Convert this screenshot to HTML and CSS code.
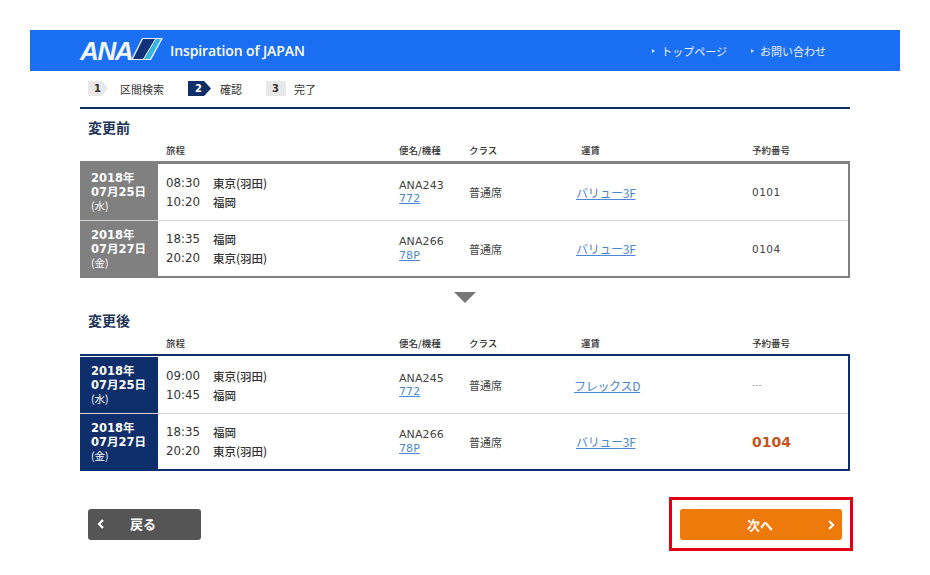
FILE: index.html
```html
<!DOCTYPE html>
<html lang="ja">
<head>
<meta charset="utf-8">
<title>ANA</title>
<link rel="stylesheet" href="styles.css">
</head>
<body>
<div class="page">
  <header class="topbar">
    <div class="brand">
      <span class="logo-text">ANA</span>
      <svg class="logo-tail" width="32" height="24" viewBox="0 0 32 24">
        <polygon points="11,1 32,1 20,23 0,23" fill="#eaf4ff"/>
        <polygon points="12,2 24,2 12,22 2,22" fill="#14327a"/>
        <polygon points="25,2 30,2 19,22 13,22" fill="#37b4e0"/>
      </svg>
      <span class="tagline">Inspiration of JAPAN</span>
    </div>
    <nav class="topnav">
      <a class="topnav-link">トップページ</a>
      <a class="topnav-link">お問い合わせ</a>
    </nav>
  </header>
  <main class="main">
    <ol class="steps">
      <li class="step step-one"><span class="chip chip-arrow">1</span><span class="step-label">区間検索</span></li>
      <li class="step step-two"><span class="chip chip-arrow chip-active">2</span><span class="step-label">確認</span></li>
      <li class="step step-three"><span class="chip">3</span><span class="step-label">完了</span></li>
    </ol>
    <div class="rule"></div>

    <h2 class="section-title">変更前</h2>
    <div class="cols col-head">
      <span></span><span class="head-route">旅程</span><span>便名/機種</span><span>クラス</span><span class="head-fare">運賃</span><span>予約番号</span>
    </div>
    <section class="itinerary itinerary-before">
      <div class="cols row">
        <div class="date">2018年<br>07月25日<br><small>(水)</small></div>
        <div class="route">
          <div class="leg"><span class="time">08:30</span><span class="place">東京(羽田)</span></div>
          <div class="leg"><span class="time">10:20</span><span class="place">福岡</span></div>
        </div>
        <div class="flight">ANA243<br><a class="link">772</a></div>
        <div class="plain">普通席</div>
        <div class="fare"><a class="link">バリュー3F</a></div>
        <div class="code">0101</div>
      </div>
      <div class="cols row">
        <div class="date">2018年<br>07月27日<br><small>(金)</small></div>
        <div class="route">
          <div class="leg"><span class="time">18:35</span><span class="place">福岡</span></div>
          <div class="leg"><span class="time">20:20</span><span class="place">東京(羽田)</span></div>
        </div>
        <div class="flight">ANA266<br><a class="link">78P</a></div>
        <div class="plain">普通席</div>
        <div class="fare"><a class="link">バリュー3F</a></div>
        <div class="code">0104</div>
      </div>
    </section>

    <div class="down-arrow"></div>

    <h2 class="section-title section-title-after">変更後</h2>
    <div class="cols col-head">
      <span></span><span class="head-route">旅程</span><span>便名/機種</span><span>クラス</span><span class="head-fare">運賃</span><span>予約番号</span>
    </div>
    <section class="itinerary itinerary-after">
      <div class="cols row">
        <div class="date">2018年<br>07月25日<br><small>(水)</small></div>
        <div class="route">
          <div class="leg"><span class="time">09:00</span><span class="place">東京(羽田)</span></div>
          <div class="leg"><span class="time">10:45</span><span class="place">福岡</span></div>
        </div>
        <div class="flight">ANA245<br><a class="link">772</a></div>
        <div class="plain">普通席</div>
        <div class="fare fare-flex"><a class="link">フレックスD</a></div>
        <div class="code code-empty">---</div>
      </div>
      <div class="cols row">
        <div class="date">2018年<br>07月27日<br><small>(金)</small></div>
        <div class="route">
          <div class="leg"><span class="time">18:35</span><span class="place">福岡</span></div>
          <div class="leg"><span class="time">20:20</span><span class="place">東京(羽田)</span></div>
        </div>
        <div class="flight">ANA266<br><a class="link">78P</a></div>
        <div class="plain">普通席</div>
        <div class="fare"><a class="link">バリュー3F</a></div>
        <div class="code code-new">0104</div>
      </div>
    </section>

    <div class="actions">
      <a class="btn btn-back">
        <svg class="chev" width="8" height="10" viewBox="0 0 8 10"><polyline points="6,1 2,5 6,9" fill="none" stroke="#fff" stroke-width="2.2"/></svg>
        <span>戻る</span>
      </a>
      <div class="highlight">
        <a class="btn btn-next">
          <span>次へ</span>
          <svg class="chev" width="8" height="10" viewBox="0 0 8 10"><polyline points="2,1 6,5 2,9" fill="none" stroke="#fff" stroke-width="2.2"/></svg>
        </a>
      </div>
    </div>
  </main>
</div>
</body>
</html>
```

FILE: styles.css
```css
* { box-sizing: border-box; }
html, body { margin: 0; padding: 0; background: #fff; }
body {
  font-family: "DejaVu Sans", "Noto Sans CJK JP", sans-serif;
  color: #333;
  font-size: 11px;
}
.page { width: 930px; height: 575px; padding: 30px 30px 0; overflow: hidden; }

/* top bar */
.topbar {
  height: 41px;
  background: #1a6ff2;
  display: flex;
  align-items: center;
  justify-content: space-between;
  padding: 0 74px 0 50px;
  color: #fff;
}
.brand { display: flex; align-items: center; }
.logo-text {
  font-family: "Liberation Sans", sans-serif;
  font-weight: 700;
  font-style: italic;
  font-size: 26px;
  letter-spacing: -1.4px;
  line-height: 28px;
  width: 51px;
  color: #f2f7ff;
}
.logo-tail { margin-right: 7px; margin-top: -3px; }
.tagline {
  font-family: "Open Sans", sans-serif;
  font-weight: 600;
  font-size: 14px;
  letter-spacing: -0.1px;
  line-height: 20px;
}
.topnav { display: flex; gap: 24px; }
.topnav-link {
  font-family: "Noto Sans CJK JP", sans-serif;
  font-size: 11px;
  line-height: 16px;
  display: flex;
  align-items: center;
  color: #eef4ff;
}
.topnav-link::before {
  content: "";
  width: 0;
  height: 0;
  margin-right: 6px;
  border-left: 3px solid #dce9ff;
  border-top: 2px solid transparent;
  border-bottom: 2px solid transparent;
}

/* main */
.main { padding: 0 50px; }

/* steps */
.steps {
  list-style: none;
  margin: 0;
  padding: 9px 0 0 8px;
  display: flex;
  height: 26px;
}
.step { display: flex; align-items: center; height: 17px; }
.step-one { width: 100px; }
.step-two { width: 78px; }
.chip {
  width: 20px;
  height: 15px;
  background: #e8e8e8;
  color: #333;
  font-size: 10px;
  line-height: 15px;
  padding-left: 6px;
  font-weight: 700;
}
.chip-arrow { clip-path: polygon(0 0, 70% 0, 100% 50%, 70% 100%, 0 100%); }
.chip-active { background: #0f2f69; color: #fff; width: 23px; padding-left: 7px; }
.step-label {
  font-family: "Noto Sans CJK JP", sans-serif;
  font-size: 11px;
  line-height: 16px;
  color: #333;
}
.step-one .step-label { margin-left: 12px; }
.step-two .step-label { margin-left: 9px; }
.step-three .step-label { margin-left: 8px; }

.rule { height: 2px; background: #0f2a55; margin-top: 10px; }

/* section */
.section-title {
  margin: 8px 0 0;
  padding-left: 8px;
  font-family: "Noto Sans CJK JP", sans-serif;
  font-size: 14px;
  line-height: 20px;
  font-weight: 700;
  color: #1d3557;
}
.section-title-after { margin-top: 7px; }
.cols {
  display: grid;
  grid-template-columns: 78px 241px 70px 107px 176px 1fr;
  align-items: center;
}
.col-head {
  margin: 6px 0 4px;
  height: 14px;
  font-family: "Noto Sans CJK JP", sans-serif;
  font-size: 9.5px;
  line-height: 14px;
  font-weight: 500;
  color: #333;
}
.head-route { padding-left: 8px; }
.head-fare { padding-left: 5px; }

/* itinerary */
.itinerary { height: 117px; border-style: solid; border-left: 0; }
.itinerary-before { border-color: #808080; border-width: 3px 2px 2px 0; }
.itinerary-after { border-color: #0e2f6b; border-width: 2px 2px 2px 0; }
.itinerary-before .date { background: #808080; }
.itinerary-after .date { background: #0e2f6b; }
.itinerary-after { padding-top: 1px; }
.row { height: 56px; }
.row + .row { border-top: 1px solid #d4d4d4; }
.date {
  height: 100%;
  padding-left: 11px;
  display: flex;
  flex-direction: column;
  justify-content: center;
  display: block;
  padding-top: 7px;
  color: #fff;
  font-size: 11.5px;
  line-height: 14px;
  font-weight: 700;
}
.date small { font-size: 10.5px; font-weight: 400; font-family: "Noto Sans CJK JP", sans-serif; }
.route { padding-left: 8px; }
.leg { display: flex; height: 19px; align-items: center; }
.time { width: 47px; font-size: 11.8px; color: #333; }
.place {
  font-family: "Noto Sans CJK JP", sans-serif;
  font-size: 11.5px;
  font-weight: 500;
  color: #333;
}
.flight { font-size: 11px; line-height: 13.5px; color: #444; letter-spacing: 0.1px; }
.link { color: #4d86d6; text-decoration: underline; }
.plain {
  font-family: "Noto Sans CJK JP", sans-serif;
  font-size: 11px;
  color: #444;
}
.fare { font-family: "Noto Sans CJK JP", sans-serif; font-size: 12px; letter-spacing: -0.3px; }
.fare-flex { margin-left: -2px; }
.code { font-size: 10.5px; color: #444; letter-spacing: 0.5px; }
.code-empty { color: #888; font-size: 8px; }
.code-new { color: #c9541a; font-size: 14px; font-weight: 700; letter-spacing: 0; }

.down-arrow {
  width: 0;
  height: 0;
  margin: 14px auto 0;
  border-left: 11px solid transparent;
  border-right: 11px solid transparent;
  border-top: 11px solid #777;
}

/* actions */
.actions {
  display: flex;
  justify-content: space-between;
  align-items: center;
  margin: 26px -3px 0 8px;
}
.btn {
  display: flex;
  align-items: center;
  height: 31px;
  border-radius: 3px;
  color: #fff;
  font-family: "Noto Sans CJK JP", sans-serif;
  font-size: 13px;
  line-height: 18px;
  font-weight: 700;
}
.btn-back { width: 113px; background: #555; padding-left: 9px; gap: 25px; }
.highlight { width: 184px; height: 54px; border: 3px solid #df0011; padding: 9px 8px; }
.btn-next {
  width: 162px;
  height: 31px;
  background: #ee7a0c;
  padding: 0 7px 0 67px;
  justify-content: space-between;
}
```
